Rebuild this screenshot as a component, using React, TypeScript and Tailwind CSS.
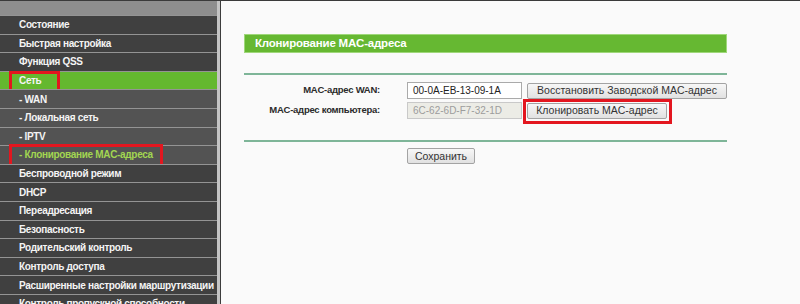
import React from "react";

interface MenuItem {
  name: string;
  sub?: boolean;
  active?: boolean;
  marked?: "short" | "long";
}

const menuItems: MenuItem[] = [
  { name: "Состояние" },
  { name: "Быстрая настройка" },
  { name: "Функция QSS" },
  { name: "Сеть", active: true, marked: "short" },
  { name: "- WAN", sub: true },
  { name: "- Локальная сеть", sub: true },
  { name: "- IPTV", sub: true },
  { name: "- Клонирование MAC-адреса", sub: true, active: true, marked: "long" },
  { name: "Беспроводной режим" },
  { name: "DHCP" },
  { name: "Переадресация" },
  { name: "Безопасность" },
  { name: "Родительский контроль" },
  { name: "Контроль доступа" },
  { name: "Расширенные настройки маршрутизации" },
  { name: "Контроль пропускной способности" },
];

function Sidebar() {
  return (
    <div className="flex w-[217px] shrink-0 flex-col bg-[#404040]">
      <div className="h-[14px] shrink-0 bg-[#8e8e8e]" />
      {menuItems.map((item) => {
        let bg = item.sub ? "bg-[#535353]" : "bg-[#404040]";
        if (item.active && !item.sub) bg = "bg-[#64b82f]";
        return (
          <div
            key={item.name}
            className={`relative flex h-[18.6px] shrink-0 items-center border-t border-[#949494] pl-[19px] ${bg}`}
          >
            <span
              className={`whitespace-nowrap text-[10px] font-bold tracking-[-0.32px] ${
                item.sub && item.active ? "text-[#a2d651]" : "text-[#f4f4f4]"
              }`}
            >
              {item.name}
            </span>
            {/* красная рамка-выделение */}
            {item.marked === "short" && (
              <div className="absolute left-[9px] top-[-1px] h-[21px] w-[51px] border-[3px] border-[#e3161f]" />
            )}
            {item.marked === "long" && (
              <div className="absolute left-[9px] top-[-2px] h-[23px] w-[154px] border-[3px] border-[#e3161f]" />
            )}
          </div>
        );
      })}
    </div>
  );
}

function Btn({ children, w }: { children: React.ReactNode; w: string }) {
  return (
    <button
      className={`flex h-[16px] items-center justify-center rounded-[2px] border border-[#a3a3a3] bg-gradient-to-b from-[#f7f7f7] to-[#e1e1e1] text-[10.5px] leading-none text-[#333] ${w}`}
    >
      {children}
    </button>
  );
}

export default function App() {
  return (
    <div
      className="flex h-[304px] w-[800px] overflow-hidden border-t border-[#3a3a3a] bg-[#fafafa]"
      style={{ fontFamily: '"Liberation Sans", Arial, sans-serif' }}
    >
      <Sidebar />
      <div className="w-[3px] shrink-0 bg-[#c4c4c4]" />
      <div className="w-px shrink-0 bg-[#3c3c3c]" />

      <div className="flex flex-1 flex-col border-r-2 border-[#a9a9a9] pl-[23px] pr-[78px] pt-[33px]">
        {/* заголовок */}
        <div className="flex h-[19px] items-center border border-[#9fd77a] bg-[#66b832] pl-[10px]">
          <span className="text-[11.5px] font-bold tracking-[-0.2px] text-white">
            Клонирование MAC-адреса
          </span>
        </div>

        <div className="mt-[20px] h-[2px] bg-[#7eb598]" />

        <div className="mt-[7px] flex flex-col gap-[3px]">
          <div className="flex items-center">
            <div className="w-[136px] text-right text-[9.5px] font-bold tracking-[-0.25px] text-[#2b2b2b]">
              MAC-адрес WAN:
            </div>
            <div className="ml-[27px] flex h-[17px] w-[115px] items-center border border-[#aaaaaa] bg-white pl-[5px] text-[10px] text-[#222]">
              00-0A-EB-13-09-1A
            </div>
            <div className="ml-[5px]">
              <Btn w="w-[200px]">Восстановить Заводской MAC-адрес</Btn>
            </div>
          </div>
          <div className="flex items-center">
            <div className="w-[136px] text-right text-[9.5px] font-bold tracking-[-0.25px] text-[#2b2b2b]">
              MAC-адрес компьютера:
            </div>
            <div className="ml-[27px] flex h-[17px] w-[115px] items-center border border-[#c9c9c9] bg-[#ececE6] pl-[5px] text-[10px] text-[#9c9c9c]">
              6C-62-6D-F7-32-1D
            </div>
            <div className="relative ml-[5px]">
              <Btn w="w-[140px]">Клонировать MAC-адрес</Btn>
              <div className="absolute left-[-4px] top-[-4px] h-[25px] w-[149px] border-[3px] border-[#e3161f]" />
            </div>
          </div>
        </div>

        <div className="mt-[21px] h-[2px] bg-[#7eb598]" />

        <div className="ml-[163px] mt-[6px]">
          <Btn w="w-[68px]">Сохранить</Btn>
        </div>
      </div>
    </div>
  );
}
